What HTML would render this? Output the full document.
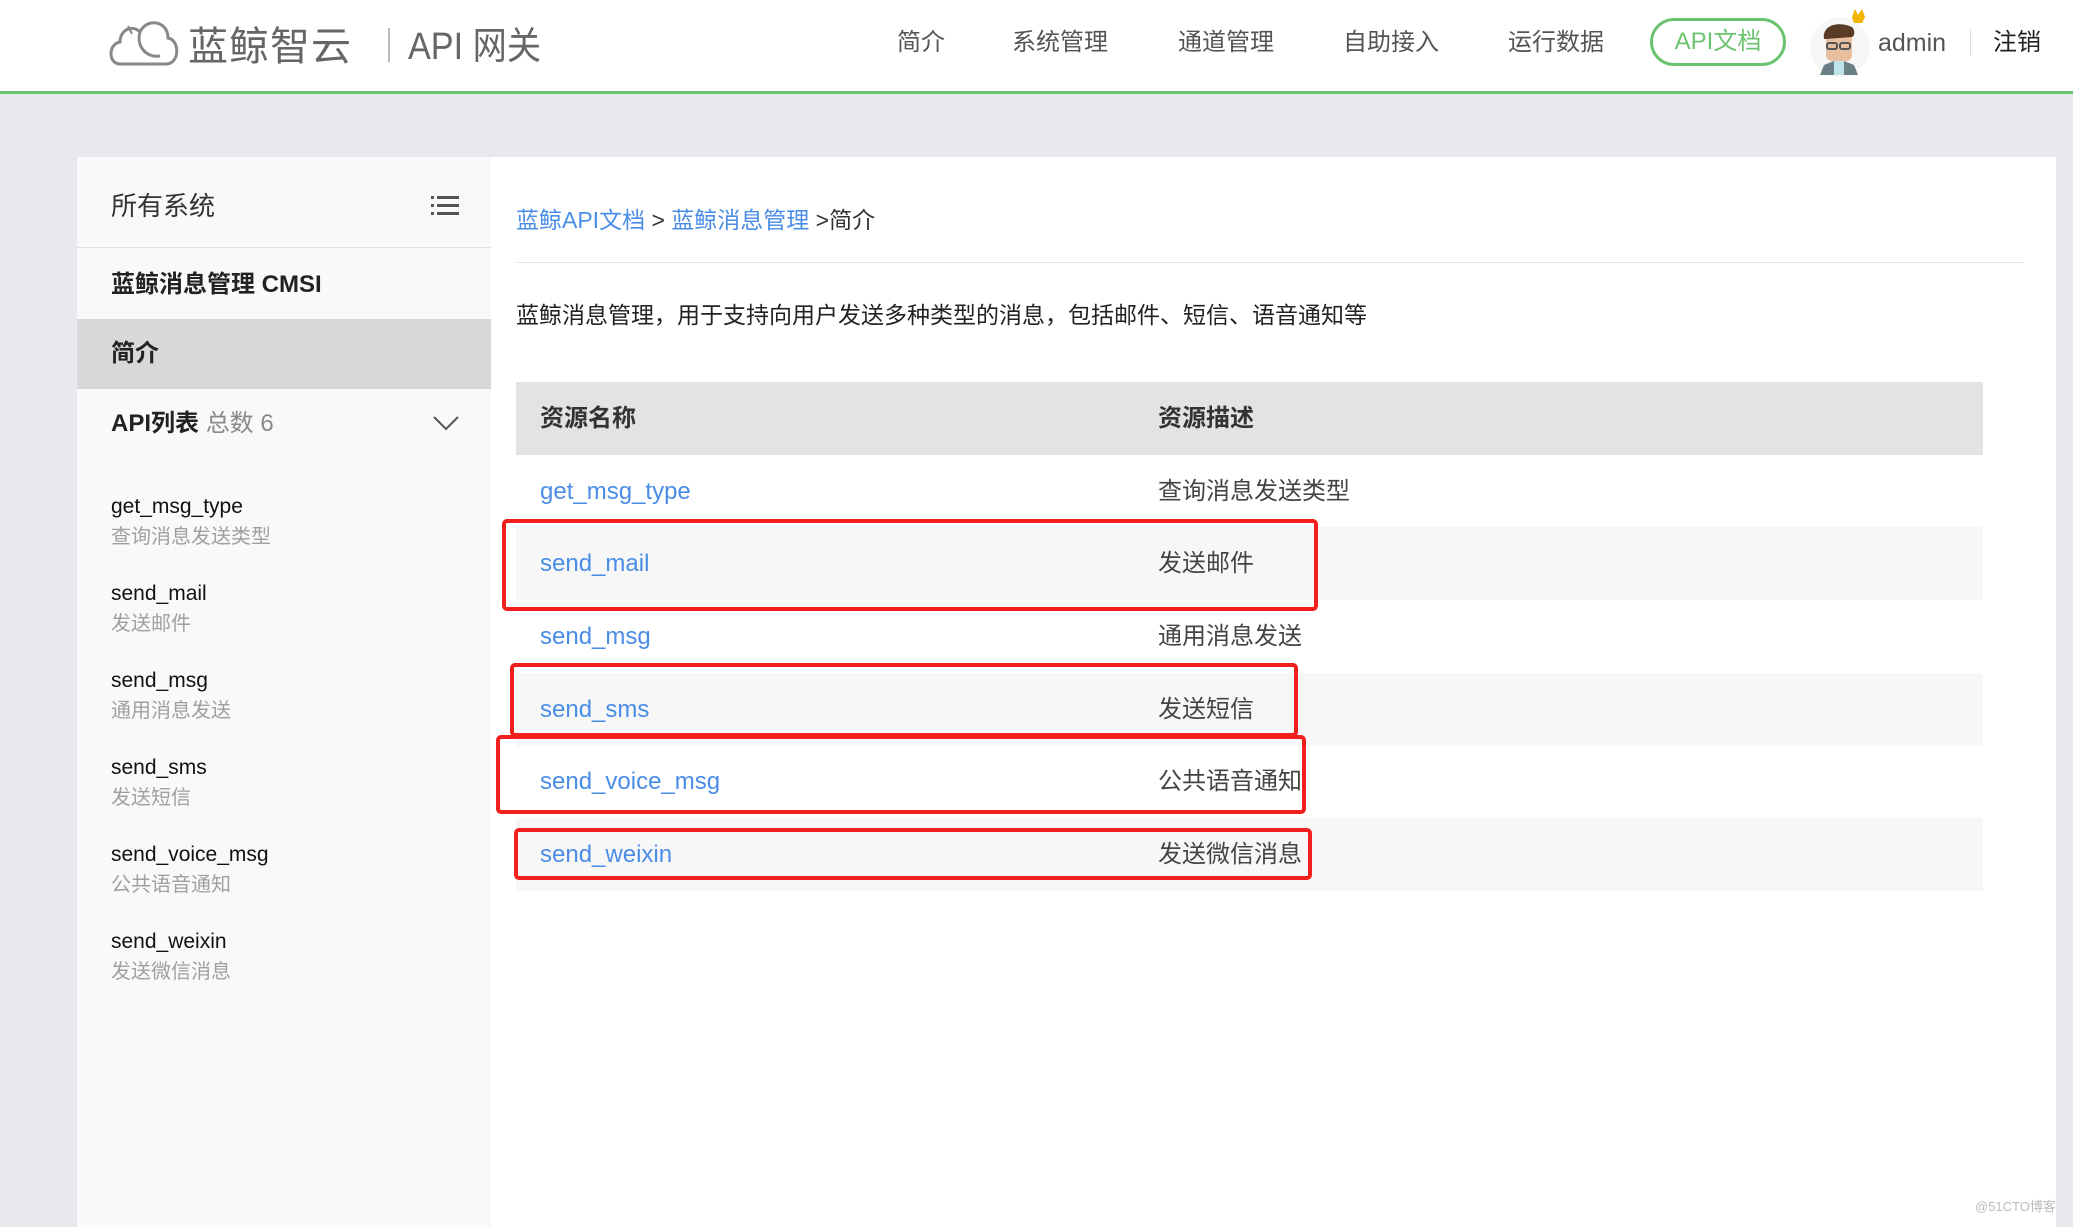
<!DOCTYPE html>
<html><head><meta charset="utf-8"><style>
*{margin:0;padding:0;box-sizing:border-box}
body{width:2073px;height:1222px;background:#e8e9ec;font-family:"Liberation Sans","Noto Sans CJK SC",sans-serif;position:relative;overflow:hidden;color:#333}
.a{position:absolute;white-space:nowrap}
#hdr{position:absolute;left:0;top:0;width:2073px;height:94px;background:#fff;border-bottom:3px solid #6cc36f}
.nav{position:absolute;top:27px;font-size:24px;color:#555;line-height:32px}
#side{position:absolute;left:77px;top:157px;width:414px;height:1070px;background:#f9f9f9}
#main{position:absolute;left:491px;top:157px;width:1565px;height:1070px;background:#fff}
.nm{font-size:21px;color:#111;line-height:30px}
.ds{font-size:20px;color:#a0a0a0;line-height:30px}
.lk{color:#4a8de6}
.row{position:absolute;left:516px;width:1467px;height:73px}
.row span{position:absolute;top:0;line-height:73px;font-size:24px}
.box{position:absolute;border:4px solid #f0201e;border-radius:5px}
</style></head><body>
<div id="hdr">
<svg class="a" style="left:106px;top:12px" width="74" height="56" viewBox="0 0 74 56"><path d="M14 52 C2 52 2 32 14 30 C14 18 26 12 34 20 C40 6 62 8 62 26 C74 28 74 52 60 52 Z" fill="none" stroke="#888" stroke-width="3"/><path d="M34 20 C30 34 40 46 54 44" fill="none" stroke="#888" stroke-width="3"/><path d="M22 14 L26 22" stroke="#888" stroke-width="2"/></svg>
<div class="a" style="left:188px;top:22px;font-size:40px;color:#666;line-height:50px;letter-spacing:1px">蓝鲸智云</div>
<div class="a" style="left:388px;top:28px;width:2px;height:34px;background:#bbb"></div>
<div class="a" style="left:408px;top:22px;font-size:38px;color:#666;line-height:50px;transform:scaleX(.9);transform-origin:left">API 网关</div>
<div class="nav" style="left:897px">简介</div>
<div class="nav" style="left:1012px">系统管理</div>
<div class="nav" style="left:1178px">通道管理</div>
<div class="nav" style="left:1343px">自助接入</div>
<div class="nav" style="left:1508px">运行数据</div>
<div class="a" style="left:1650px;top:18px;width:136px;height:48px;border:3px solid #6cc36f;border-radius:24px;color:#6cc36f;font-size:24px;line-height:42px;text-align:center">API文档</div>
<svg class="a" style="left:1808px;top:5px" width="64" height="72" viewBox="0 0 64 72"><circle cx="32" cy="42" r="30" fill="#f7f7f7"/><path d="M44 12 L47 4 L50 10 L54 4 L57 12 L54 18 L46 18Z" fill="#f5b400"/><rect x="18" y="26" width="26" height="30" rx="6" fill="#e8c0a0"/><path d="M16 34 C14 20 30 16 44 22 C48 26 46 32 44 32 L18 34Z" fill="#5a3b25"/><rect x="19" y="38" width="10" height="6" rx="2" fill="none" stroke="#555" stroke-width="2"/><rect x="32" y="38" width="10" height="6" rx="2" fill="none" stroke="#555" stroke-width="2"/><path d="M12 70 L16 60 L26 56 L36 56 L46 60 L50 70Z" fill="#6a7f86"/><rect x="26" y="56" width="10" height="14" fill="#bfe3ea"/></svg>
<div class="a" style="left:1878px;top:27px;font-size:25px;color:#555;line-height:32px">admin</div>
<div class="a" style="left:1970px;top:30px;width:1px;height:26px;background:#ddd"></div>
<div class="a" style="left:1993px;top:27px;font-size:24px;color:#222;line-height:32px">注销</div>
</div>

<div id="side">
<div class="a" style="left:34px;top:32px;font-size:26px;color:#333;line-height:34px">所有系统</div>
<svg class="a" style="left:354px;top:38px" width="28" height="22" viewBox="0 0 28 22"><g fill="#555"><rect x="0" y="1" width="3" height="3"/><rect x="6" y="1" width="22" height="3"/><rect x="0" y="9" width="3" height="3"/><rect x="6" y="9" width="22" height="3"/><rect x="0" y="17" width="3" height="3"/><rect x="6" y="17" width="22" height="3"/></g></svg>
<div class="a" style="left:0;top:90px;width:414px;height:1px;background:#e2e2e2"></div>
<div class="a" style="left:34px;top:112px;font-size:24px;font-weight:bold;color:#222;line-height:32px">蓝鲸消息管理 CMSI</div>
<div class="a" style="left:0;top:162px;width:414px;height:70px;background:#d9d8d8"></div>
<div class="a" style="left:34px;top:181px;font-size:24px;font-weight:bold;color:#222;line-height:32px">简介</div>
<div class="a" style="left:34px;top:251px;font-size:24px;line-height:32px"><b style="color:#222">API列表</b> <span style="color:#888">总数 6</span></div>
<svg class="a" style="left:356px;top:258px" width="26" height="16" viewBox="0 0 26 16"><path d="M1 2 L13 14 L25 2" fill="none" stroke="#555" stroke-width="2"/></svg>
<div class="a" style="left:34px;top:335px">
<div class="nm">get_msg_type</div><div class="ds">查询消息发送类型</div>
<div class="nm" style="margin-top:27px">send_mail</div><div class="ds">发送邮件</div>
<div class="nm" style="margin-top:27px">send_msg</div><div class="ds">通用消息发送</div>
<div class="nm" style="margin-top:27px">send_sms</div><div class="ds">发送短信</div>
<div class="nm" style="margin-top:27px">send_voice_msg</div><div class="ds">公共语音通知</div>
<div class="nm" style="margin-top:27px">send_weixin</div><div class="ds">发送微信消息</div>
</div>
</div>

<div id="main"></div>
<div class="a" style="left:516px;top:204px;font-size:23px;line-height:32px"><span class="lk">蓝鲸API文档</span> &gt; <span class="lk">蓝鲸消息管理</span> &gt;简介</div>
<div class="a" style="left:516px;top:262px;width:1507px;height:1px;background:#e5e5e5"></div>
<div class="a" style="left:516px;top:299px;font-size:23px;line-height:32px;color:#222">蓝鲸消息管理，用于支持向用户发送多种类型的消息，包括邮件、短信、语音通知等</div>
<div class="row" style="top:382px;height:73px;background:#e3e3e3"><span style="left:24px;font-weight:bold;color:#333">资源名称</span><span style="left:642px;font-weight:bold;color:#333">资源描述</span></div>
<div class="row" style="top:455px"><span class="lk" style="left:24px">get_msg_type</span><span style="left:642px;color:#444">查询消息发送类型</span></div>
<div class="row" style="top:527px;background:#f7f7f7"><span class="lk" style="left:24px">send_mail</span><span style="left:642px;color:#444">发送邮件</span></div>
<div class="row" style="top:600px"><span class="lk" style="left:24px">send_msg</span><span style="left:642px;color:#444">通用消息发送</span></div>
<div class="row" style="top:673px;background:#f7f7f7"><span class="lk" style="left:24px">send_sms</span><span style="left:642px;color:#444">发送短信</span></div>
<div class="row" style="top:745px"><span class="lk" style="left:24px">send_voice_msg</span><span style="left:642px;color:#444">公共语音通知</span></div>
<div class="row" style="top:818px;background:#f7f7f7"><span class="lk" style="left:24px">send_weixin</span><span style="left:642px;color:#444">发送微信消息</span></div>
<div class="box" style="left:502px;top:519px;width:816px;height:92px"></div>
<div class="box" style="left:510px;top:663px;width:788px;height:74px"></div>
<div class="box" style="left:496px;top:735px;width:810px;height:79px"></div>
<div class="box" style="left:514px;top:828px;width:798px;height:52px"></div>
<div class="a" style="left:1975px;top:1196px;font-size:13px;color:#bbb">@51CTO博客</div>
</body></html>
